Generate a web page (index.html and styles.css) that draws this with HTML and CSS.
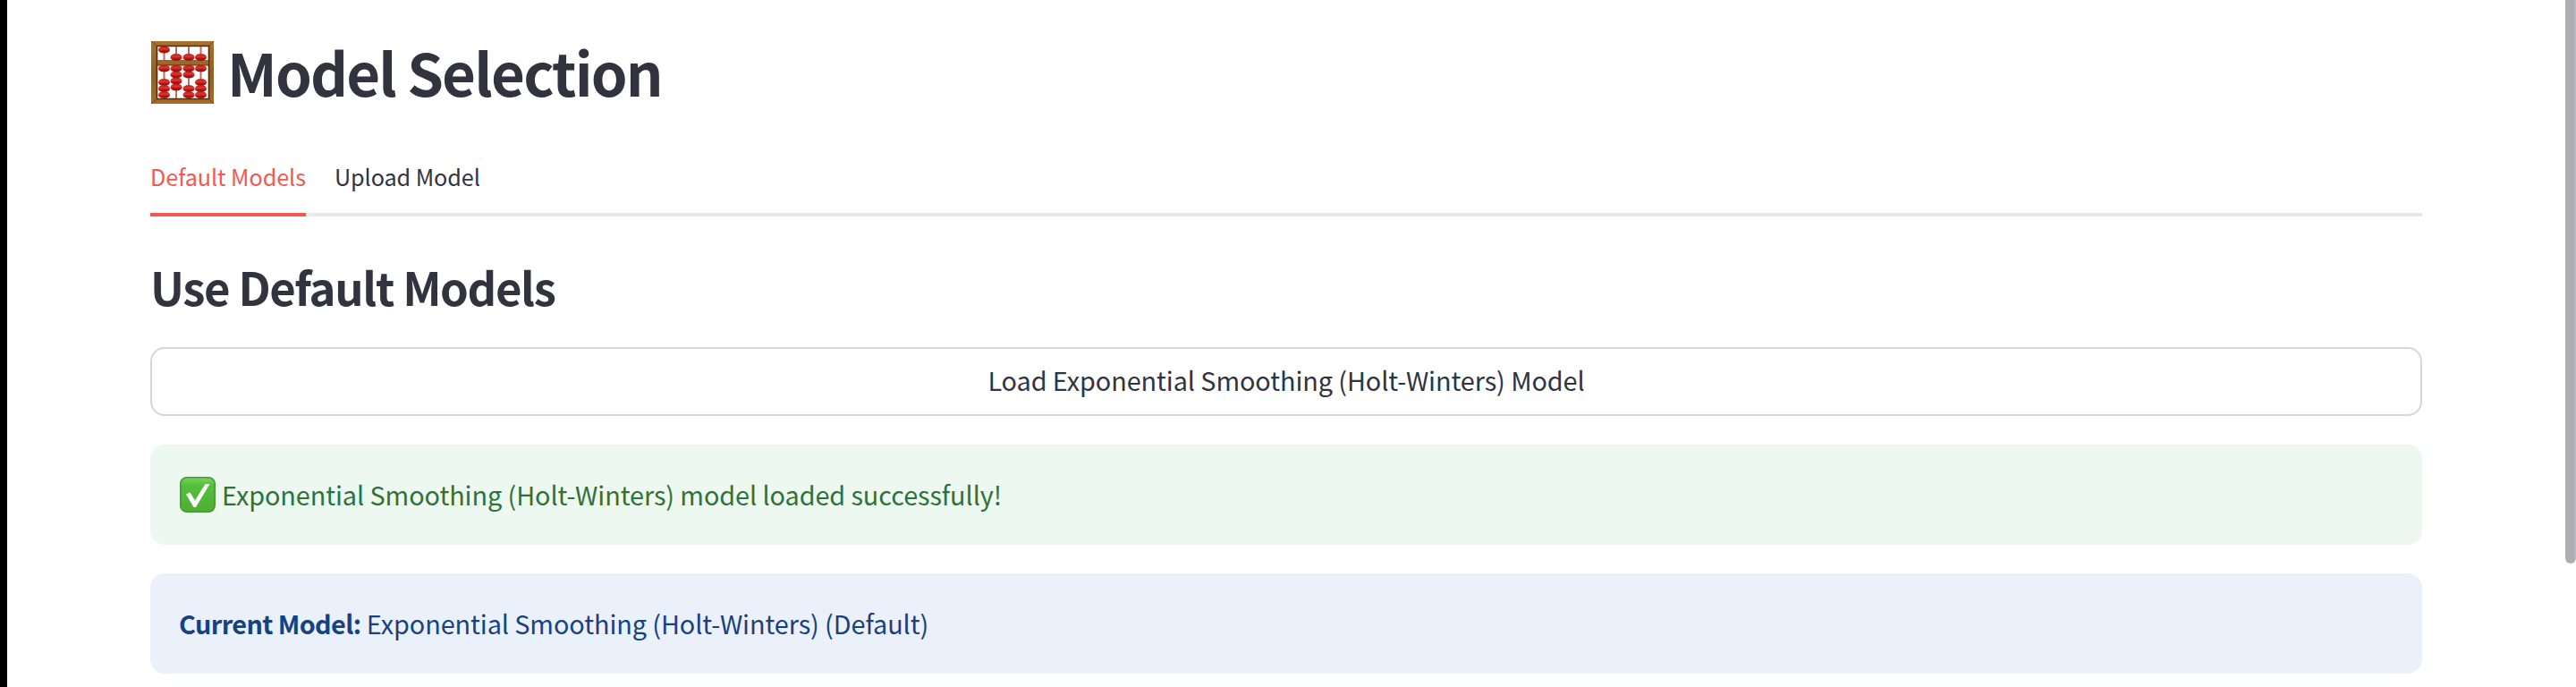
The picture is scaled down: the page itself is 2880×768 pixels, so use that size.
FILE: index.html
```html
<!DOCTYPE html>
<html lang="en">
<head>
<meta charset="utf-8">
<title>Model Selection</title>
<link rel="stylesheet" href="styles.css">
</head>
<body>
<main class="page">
  <h1 class="title">
    <svg class="abacus" viewBox="0 0 70 70" aria-hidden="true">
      <defs>
        <linearGradient id="wood" x1="0" y1="0" x2="0" y2="1"><stop offset="0" stop-color="#a8732d"/><stop offset=".5" stop-color="#94601f"/><stop offset="1" stop-color="#a56c28"/></linearGradient>
        <linearGradient id="red" x1="0" y1="0" x2="0" y2="1"><stop offset="0" stop-color="#bd1717"/><stop offset=".4" stop-color="#dc392e"/><stop offset=".65" stop-color="#b91414"/><stop offset="1" stop-color="#850b0b"/></linearGradient>
        <g id="bead"><path d="M-2.500-3.800h5Q6.500-2.500 6.500 0T2.500 3.800h-5Q-6.500 2.500-6.500 0t4-3.800z" fill="url(#red)"/></g>
      </defs>
      <path d="M0 0h70v70H0zM7 6v58h57V6z" fill="url(#wood)" fill-rule="evenodd"/>
      <path d="M0 0l7 6M70 0l-6 6M0 70l7-6M70 70l-6-6" stroke="#70430f" stroke-width=".8"/>
      <path d="M6.500 5.500h58v59h-58z" fill="none" stroke="#4c2d10" stroke-width="1.600"/>
      <path d="M14.500 6v58M28 6v58M42 6v58M55.500 6v58" stroke="#b8715b" stroke-width="2"/>
      <path d="M7 21h57v6H7z" fill="#9c682a"/><path d="M7 27h57" stroke="#4c2d10" stroke-width="1.200"/>
      <use href="#bead" x="14.500" y="9.500"/><use href="#bead" x="28" y="18"/><use href="#bead" x="42" y="18"/><use href="#bead" x="55.500" y="18"/>
      <use href="#bead" x="14.500" y="30.500"/><use href="#bead" x="28" y="30.500"/><use href="#bead" x="42" y="30.500"/><use href="#bead" x="55.500" y="30.500"/>
      <use href="#bead" x="28" y="37.500"/><use href="#bead" x="42" y="37.500"/><use href="#bead" x="28" y="44.500"/><use href="#bead" x="28" y="51.500"/>
      <use href="#bead" x="14.500" y="46"/><use href="#bead" x="14.500" y="53"/><use href="#bead" x="14.500" y="60"/>
      <use href="#bead" x="42" y="53"/><use href="#bead" x="42" y="60"/>
      <use href="#bead" x="55.500" y="46"/><use href="#bead" x="55.500" y="53"/><use href="#bead" x="55.500" y="60"/>
    </svg>
    <span>Model Selection</span>
  </h1>
  <nav class="tabs">
    <a class="tab active">Default Models</a>
    <a class="tab">Upload Model</a>
  </nav>
  <h2 class="subtitle">Use Default Models</h2>
  <button class="load">Load Exponential Smoothing (Holt-Winters) Model</button>
  <div class="alert success">
    <svg class="check" viewBox="0 0 40 40" aria-hidden="true">
      <defs><linearGradient id="green" x1="0" y1="0" x2="0" y2="1"><stop offset="0" stop-color="#7ad35c"/><stop offset=".22" stop-color="#55c03c"/><stop offset="1" stop-color="#4fae33"/></linearGradient></defs>
      <rect x=".8" y=".8" width="38.400" height="38.400" rx="7" fill="url(#green)" stroke="#439a37" stroke-width="1.600"/>
      <path d="M7 19.500l4.500-2 5.500 9L28.500 8h5L18 34h-2.500z" fill="#fff"/>
    </svg>
    <p>Exponential Smoothing (Holt-Winters) model loaded successfully!</p>
  </div>
  <div class="alert info"><p><strong>Current Model:</strong> Exponential Smoothing (Holt-Winters) (Default)</p></div>
</main>
<div class="scrollbar"></div>
</body>
</html>
```
FILE: styles.css
```css
* { box-sizing: border-box; }
body {
  margin: 0;
  height: 768px;
  overflow: hidden;
  display: flex;
  background: #fff;
  border-left: 8px solid #000;
  color: #31333f;
  font-family: "Noto Sans CJK SC", "Noto Sans", sans-serif;
  font-size: 28.8px;
  letter-spacing: -0.07px;
}
.page { flex: 1; padding: 33px 172px 0 160px; }
.title { display: flex; align-items: center; gap: 15px; height: 96px; margin: 0; font-size: 65.3px; line-height: 96px; font-weight: 700; letter-spacing: -1.8px; }
.title span { margin-bottom: 3px; }
.abacus { width: 70px; height: 70px; margin-left: 1px; }
.tabs { display: flex; gap: 32px; height: 80px; margin-top: 33px; box-shadow: inset 0 -4px #e9e9ea; font-size: 25.2px; line-height: 71px; }
.tab.active { color: #f15a54; border-bottom: 4px solid #f15a54; }
.subtitle { margin: 38px 0 28px; font-size: 50.8px; line-height: 80px; font-weight: 700; letter-spacing: -1.35px; }
.load { display: block; width: 100%; height: 77px; padding: 0 0 4px; border: 2px solid #d6d6d8; border-radius: 16px; background: #fff; color: inherit; font: inherit; letter-spacing: inherit; line-height: 69px; }
.alert { display: flex; align-items: center; height: 112px; margin-top: 32px; padding: 0 32px; border-radius: 16px; }
.alert p { margin: 0 0 2px; }
.alert strong { letter-spacing: -0.6px; }
.success { gap: 7px; background: #edf8f0; color: #2f7238; }
.info { background: #eaf1fb; color: #174180; }
.check { width: 40px; height: 40px; margin-left: 1px; }
.scrollbar { width: 12px; height: 630px; margin-left: -12px; background: linear-gradient(90deg, #adadb2 10px, #b8b8bf 10px); border-radius: 0 0 6px 6px; }
```
